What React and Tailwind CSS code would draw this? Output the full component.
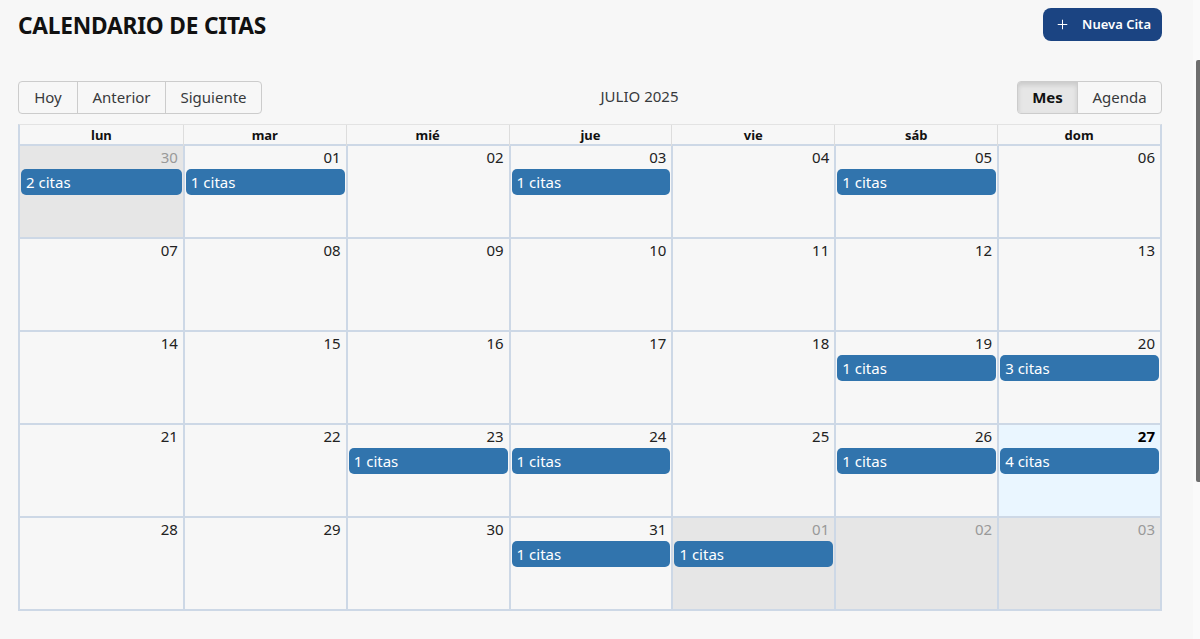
import { Plus } from "lucide-react";

const dias = ["lun", "mar", "mié", "jue", "vie", "sáb", "dom"];

// cada semana: [numero, fueraDeMes, citas]
const semanas = [
  [["30", true, 2], ["01", false, 1], ["02", false, 0], ["03", false, 1], ["04", false, 0], ["05", false, 1], ["06", false, 0]],
  [["07", false, 0], ["08", false, 0], ["09", false, 0], ["10", false, 0], ["11", false, 0], ["12", false, 0], ["13", false, 0]],
  [["14", false, 0], ["15", false, 0], ["16", false, 0], ["17", false, 0], ["18", false, 0], ["19", false, 1], ["20", false, 3]],
  [["21", false, 0], ["22", false, 0], ["23", false, 1], ["24", false, 1], ["25", false, 0], ["26", false, 1], ["27", false, 4]],
  [["28", false, 0], ["29", false, 0], ["30", false, 0], ["31", false, 1], ["01", true, 1], ["02", true, 0], ["03", true, 0]],
];

function Celda({ dia, idx }) {
  const [num, fuera, citas] = dia;
  const hoy = num === "27" && !fuera;
  return (
    <div
      className={`flex flex-col h-full ${idx > 0 ? "border-l-2 border-[#cdd8e6]" : ""} ${
        fuera ? "bg-[#e6e6e6]" : hoy ? "bg-[#eaf6ff]" : ""
      }`}
    >
      <div
        className={`text-right pr-[5px] pt-[1px] h-[23px] text-[15px] leading-[20px] ${
          fuera ? "text-[#999]" : "text-[#222]"
        } ${hoy ? "font-bold text-black" : ""}`}
      >
        {num}
      </div>
      {citas > 0 && (
        <div className="mx-[1px] h-[26px] rounded-[5px] bg-[#3174ad] text-white text-[15px] leading-[26px] px-[5px]">
          {citas} citas
        </div>
      )}
    </div>
  );
}

export default function App() {
  return (
    <div
      className="relative w-[1200px] h-[639px] overflow-hidden bg-[#f7f7f7] text-[#373a3c]"
      style={{ fontFamily: '"Noto Sans", "Open Sans", sans-serif' }}
    >
      <div className="pl-[18px] w-[1162px]">
        {/* --- Encabezado --- */}
        <div className="flex justify-between items-center pt-[8px] h-[41px]">
          <h1 className="text-[22.7px] font-bold text-[#111] tracking-[-0.2px] leading-none pt-[3px]">
            CALENDARIO DE CITAS
          </h1>
          <button className="flex items-center h-[33px] pl-[12px] pr-[11px] rounded-[8px] bg-[#1b4482] text-white text-[13px] font-semibold gap-[12px]">
            <Plus size={15} strokeWidth={1.6} />
            Nueva Cita
          </button>
        </div>

        {/* --- Toolbar --- */}
        <div className="flex items-center mt-[40px] h-[33px]">
          <div className="flex h-[33px] border border-[#ccc] rounded-[4px] text-[15px] text-[#373a3c]">
            <button className="w-[59px] border-r border-[#ccc]">Hoy</button>
            <button className="w-[88px] border-r border-[#ccc]">Anterior</button>
            <button className="w-[95px]">Siguiente</button>
          </div>
          <div className="flex-1 text-center text-[15px] text-[#373a3c] pb-[2px]">JULIO 2025</div>
          <div className="flex h-[33px] border border-[#ccc] rounded-[4px] text-[15px] text-[#373a3c] overflow-hidden">
            <button className="w-[60px] border-r border-[#ccc] bg-[#e6e6e6] font-bold text-[#111] shadow-[inset_0_3px_5px_rgba(0,0,0,0.125)]">
              Mes
            </button>
            <button className="w-[83px]">Agenda</button>
          </div>
        </div>

        {/* --- Vista mensual --- */}
        <div className="mt-[10px] border-2 border-t border-[#cdd8e6] border-t-[#e3e3e3]">
          <div className="grid grid-cols-7 h-[21px] border-b-2 border-[#cdd8e6]">
            {dias.map((d, i) => (
              <div
                key={d}
                className={`text-center text-[13px] font-bold text-[#111] leading-[21px] ${
                  i > 0 ? "border-l border-[#ddd]" : ""
                }`}
              >
                {d}
              </div>
            ))}
          </div>
          {semanas.map((s, w) => (
            <div
              key={w}
              className={`grid grid-cols-7 ${w > 0 ? "h-[93px] border-t-2 border-[#cdd8e6]" : "h-[91px]"}`}
            >
              {s.map((d, i) => (
                <Celda key={i} dia={d} idx={i} />
              ))}
            </div>
          ))}
        </div>
      </div>

      {/* barra de scroll */}
      <div className="absolute top-0 right-0 w-[7px] h-[639px] bg-[#fafafa]">
        <div className="absolute top-[60px] right-0 w-[4px] h-[422px] rounded-l-[2px] bg-[#6e6e6e]" />
      </div>
    </div>
  );
}
